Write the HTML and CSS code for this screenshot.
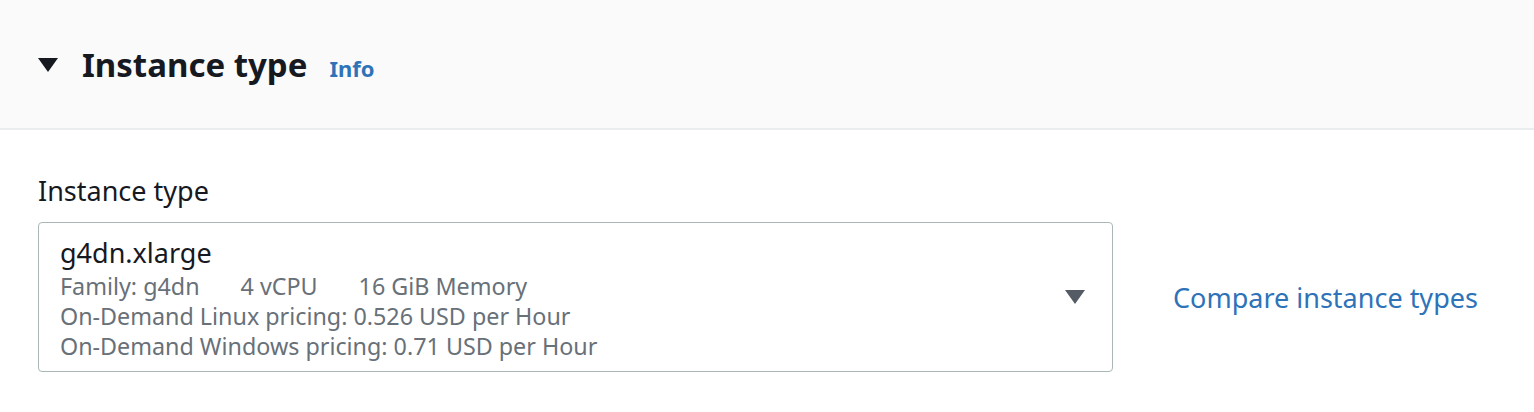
FILE: index.html
```html
<!DOCTYPE html>
<html lang="en">
<head>
<meta charset="utf-8">
<link rel="stylesheet" href="styles.css">
</head>
<body>
<section class="panel">
  <header class="panel-header">
    <svg class="caret" width="20" height="16" viewBox="0 0 20 16"><path d="M0 1 H20 L10 15 Z" fill="#16191f"/></svg>
    <h2 class="title">Instance type</h2>
    <a class="info" href="#">Info</a>
  </header>
  <div class="panel-body">
    <div class="field-label">Instance type</div>
    <div class="field-row">
      <div class="select">
        <div class="select-text">
          <div class="option-name">g4dn.xlarge</div>
          <div class="option-tags"><span>Family: g4dn</span><span>4 vCPU</span><span>16 GiB Memory</span></div>
          <div class="option-desc">On-Demand Linux pricing: 0.526 USD per Hour</div>
          <div class="option-desc">On-Demand Windows pricing: 0.71 USD per Hour</div>
        </div>
        <svg class="select-caret" width="20" height="14" viewBox="0 0 20 14"><path d="M0 0 H20 L10 14 Z" fill="#545b64"/></svg>
      </div>
      <a class="compare" href="#">Compare instance types</a>
    </div>
  </div>
</section>
</body>
</html>
```

FILE: styles.css
```css
html, body {
  margin: 0;
  padding: 0;
  background: #ffffff;
}
body {
  font-family: "Noto Sans", "Open Sans", sans-serif;
  color: #16191f;
}
.panel-header {
  background: #fafafa;
  border-bottom: 2px solid #eaeded;
  display: flex;
  align-items: center;
  padding-left: 38px;
  box-sizing: border-box;
  height: 130px;
}
.caret {
  margin-right: 24px;
  margin-top: 2px;
}
.title {
  margin: 0;
  font-size: 33px;
  font-weight: 700;
  color: #16191f;
}
.info {
  margin-left: 22px;
  margin-top: 8px;
  font-size: 22px;
  font-weight: 700;
  color: #2e73b8;
  text-decoration: none;
}
.panel-body {
  padding: 42px 38px 0 38px;
}
.field-label {
  font-size: 27px;
  line-height: 38px;
  color: #16191f;
  margin-bottom: 12px;
}
.field-row {
  display: flex;
  align-items: center;
}
.select {
  width: 1075px;
  height: 150px;
  box-sizing: border-box;
  border: 1px solid #aab7b8;
  border-radius: 4px;
  display: flex;
  align-items: center;
  padding: 0 27px 0 21px;
}
.select-text {
  flex: 1;
  margin-top: 2px;
}
.option-name {
  font-size: 27px;
  line-height: 34px;
  color: #16191f;
  margin-bottom: 1px;
}
.option-tags, .option-desc {
  font-size: 23.3px;
  line-height: 30px;
  color: #687078;
}
.option-tags span {
  margin-right: 41px;
}
.compare {
  margin-left: 60px;
  font-size: 27px;
  color: #2e73b8;
  text-decoration: none;
}
```
